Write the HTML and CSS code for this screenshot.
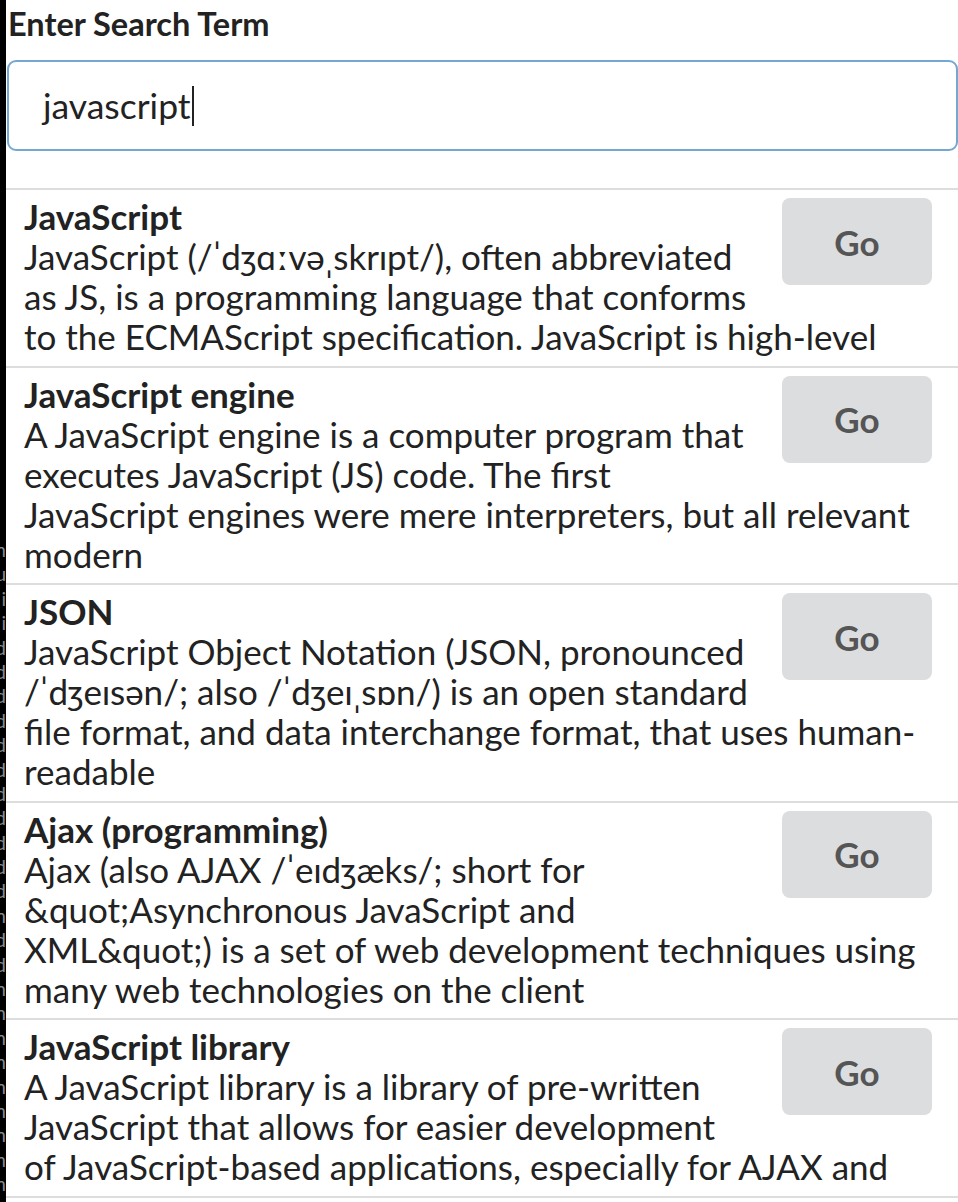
FILE: index.html
```html
<!DOCTYPE html>
<html lang="en">
<head>
<meta charset="utf-8">
<title>Search</title>
<link rel="stylesheet" href="styles.css">
</head>
<body>
<div class="page">
  <div class="strip" aria-hidden="true">
    <div class="ch">m</div><div class="ch">u</div><div class="ch">i</div><div class="ch">i</div>
    <div class="ch">d</div><div class="ch">d</div><div class="ch">d</div><div class="ch">d</div>
    <div class="ch">d</div><div class="ch">d</div><div class="ch">d</div><div class="ch">d</div>
    <div class="ch">d</div><div class="ch">d</div><div class="ch">d</div><div class="ch">m</div>
    <div class="ch">d</div><div class="ch">d</div><div class="ch">m</div><div class="ch">m</div>
    <div class="ch">m</div><div class="ch">m</div><div class="ch">m</div><div class="ch">m</div>
    <div class="ch">m</div><div class="ch">m</div><div class="ch">m</div>
  </div>
  <main class="main">
    <label class="label">Enter Search Term</label>
    <div class="search"><span class="search-text">javascript</span><span class="caret"></span></div>
    <ul class="results">
      <li class="item">
        <button class="go">Go</button>
        <div class="title">JavaScript</div>
        <div class="desc">JavaScript (/ˈdʒɑːvəˌskrɪpt/), often abbreviated as JS, is a programming language that conforms to the ECMAScript specification. JavaScript is high-level</div>
      </li>
      <li class="item">
        <button class="go">Go</button>
        <div class="title">JavaScript engine</div>
        <div class="desc">A JavaScript engine is a computer program that executes JavaScript (JS) code. The first JavaScript engines were mere interpreters, but all relevant modern</div>
      </li>
      <li class="item">
        <button class="go">Go</button>
        <div class="title">JSON</div>
        <div class="desc">JavaScript Object Notation (JSON, pronounced /ˈdʒeɪsən/; also /ˈdʒeɪˌsɒn/) is an open standard file format, and data interchange format, that uses human-readable</div>
      </li>
      <li class="item">
        <button class="go">Go</button>
        <div class="title">Ajax (programming)</div>
        <div class="desc">Ajax (also AJAX /ˈeɪdʒæks/; short for &amp;quot;Asynchronous JavaScript and XML&amp;quot;) is a set of web development techniques using many web technologies on the client</div>
      </li>
      <li class="item">
        <button class="go">Go</button>
        <div class="title">JavaScript library</div>
        <div class="desc">A JavaScript library is a library of pre-written JavaScript that allows for easier development of JavaScript-based applications, especially for AJAX and</div>
      </li>
    </ul>
  </main>
</div>
</body>
</html>
```

FILE: styles.css
```css
html, body {
  margin: 0;
  padding: 0;
  background: #fff;
}

body {
  font-family: Lato, "Open Sans", sans-serif;
  color: #222;
}

.page {
  display: flex;
  align-items: stretch;
  min-height: 1202px;
}

.strip {
  flex: 0 0 6px;
  width: 6px;
  background: #000;
  overflow: hidden;
  padding-top: 538px;
  box-sizing: border-box;
}

.ch {
  display: flex;
  justify-content: flex-end;
  width: 6px;
  height: 24.4px;
  line-height: 24.4px;
  font-size: 19px;
  color: #8a8a8a;
  white-space: nowrap;
}

.main {
  flex: 1;
  min-width: 0;
}

.label {
  display: block;
  margin: 5px 0 0 2px;
  font-size: 32.5px;
  line-height: 38px;
  font-weight: 700;
  color: #222;
}

.search {
  margin-top: 17px;
  margin-left: 1px;
  height: 91px;
  box-sizing: border-box;
  border: 2px solid #74a8d3;
  border-radius: 9px;
  display: flex;
  align-items: center;
  padding-left: 34px;
  font-size: 35.5px;
  color: #222;
}

.caret {
  display: inline-block;
  width: 2px;
  height: 40px;
  background: #222;
  margin-left: 1px;
}

.results {
  list-style: none;
  margin: 37px 0 0 0;
  padding: 0;
}

.item {
  border-top: 2px solid #dddddd;
  padding: 6px 26px 9.5px 18px;
  font-size: 35px;
  line-height: 40px;
}

.item:last-child {
  border-bottom: 2px solid #dddddd;
}

.item::after {
  content: "";
  display: block;
  clear: both;
}

.go {
  float: right;
  width: 150px;
  height: 87px;
  margin: 2px 0 8px 30px;
  border: 0;
  border-radius: 8px;
  background: #dcdddf;
  color: #555;
  font-family: Lato, "Open Sans", sans-serif;
  font-size: 35px;
  font-weight: 700;
  padding: 0;
}

.title {
  font-weight: 700;
}
```
